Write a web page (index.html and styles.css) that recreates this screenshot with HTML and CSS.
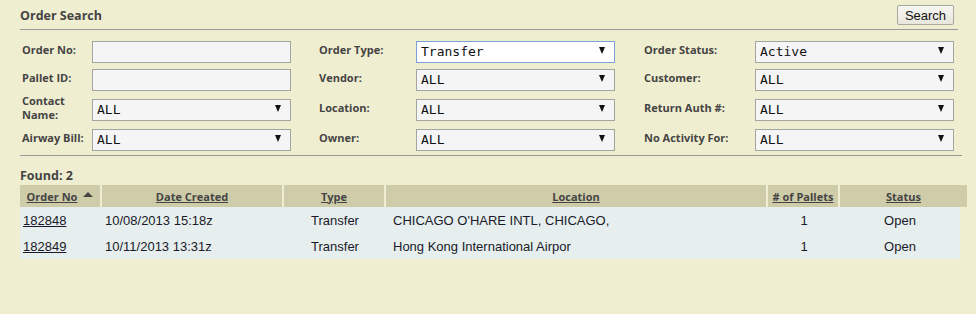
FILE: index.html
```html
<!DOCTYPE html>
<html>

<head>
    <meta charset="utf-8">
    <title>Order Search</title>
    <link rel="stylesheet" href="styles.css">
</head>

<body>
    <div class="page">

        <div class="search-head">
            <h1>Order Search</h1>
            <button class="btn">Search</button>
        </div>

        <div class="form">
            <label>Order No:</label>
            <div class="field"><input type="text"></div>
            <label>Order Type:</label>
            <div class="field sel focus"><select><option>Transfer</option></select></div>
            <label>Order Status:</label>
            <div class="field sel"><select><option>Active</option></select></div>

            <label>Pallet ID:</label>
            <div class="field"><input type="text"></div>
            <label>Vendor:</label>
            <div class="field sel"><select><option>ALL</option></select></div>
            <label>Customer:</label>
            <div class="field sel"><select><option>ALL</option></select></div>

            <label class="wrap">Contact Name:</label>
            <div class="field sel"><select><option>ALL</option></select></div>
            <label>Location:</label>
            <div class="field sel"><select><option>ALL</option></select></div>
            <label>Return Auth #:</label>
            <div class="field sel"><select><option>ALL</option></select></div>

            <label>Airway Bill:</label>
            <div class="field sel"><select><option>ALL</option></select></div>
            <label>Owner:</label>
            <div class="field sel"><select><option>ALL</option></select></div>
            <label>No Activity For:</label>
            <div class="field sel"><select><option>ALL</option></select></div>
        </div>

        <div class="found">Found: 2</div>

        <div class="results">
            <div class="row head">
                <div class="cell"><a href="#">Order No</a><span class="sort"></span></div>
                <div class="cell"><a href="#">Date Created</a></div>
                <div class="cell"><a href="#">Type</a></div>
                <div class="cell"><a href="#">Location</a></div>
                <div class="cell"><a href="#"># of Pallets</a></div>
                <div class="cell"><a href="#">Status</a></div>
            </div>
            <div class="row data">
                <div class="cell"><a href="#">182848</a></div>
                <div class="cell date">10/08/2013 15:18z</div>
                <div class="cell c">Transfer</div>
                <div class="cell loc">CHICAGO O'HARE INTL, CHICAGO,</div>
                <div class="cell c">1</div>
                <div class="cell c">Open</div>
            </div>
            <div class="row data">
                <div class="cell"><a href="#">182849</a></div>
                <div class="cell date">10/11/2013 13:31z</div>
                <div class="cell c">Transfer</div>
                <div class="cell loc">Hong Kong International Airpor</div>
                <div class="cell c">1</div>
                <div class="cell c">Open</div>
            </div>
        </div>

    </div>
</body>

</html>
```

FILE: styles.css
```css
html,
body {
    margin: 0;
    padding: 0;
    height: 100%;
    background: #f0eed0;
}

.page {
    padding: 5px 0 0 20px;
    font-family: "Open Sans", "Liberation Sans", sans-serif;
    color: #444;
}

.search-head {
    width: 938px;
    height: 24px;
    display: flex;
    justify-content: space-between;
    align-items: flex-start;
    border-bottom: 1px solid #999;
}

.search-head h1 {
    margin: 0;
    padding-top: 3px;
    font-size: 12.5px;
    font-weight: bold;
    line-height: 16px;
}

.btn {
    margin-right: 4px;
    height: 20px;
    width: 57px;
    padding: 0;
    border: 1px solid #a8a8a0;
    border-radius: 2px;
    background: linear-gradient(#f7f7f3, #e8e6dc);
    font-family: "Liberation Sans", Arial, sans-serif;
    font-size: 13px;
    color: #111;
}

.form {
    width: 940px;
    padding: 6px 0 3px 2px;
    display: grid;
    grid-template-columns: 70px 227px 97px 228px 111px 199px;
    grid-template-rows: 28px 28px 32px 28px;
    align-items: center;
    border-bottom: 1px solid #999;
}

.form label {
    font-size: 11px;
    font-weight: bold;
    line-height: 14px;
    white-space: nowrap;
}

.form label.wrap {
    white-space: normal;
}

.field {
    width: 199px;
    height: 22px;
    position: relative;
}

.field input,
.field select {
    box-sizing: border-box;
    width: 100%;
    height: 100%;
    margin: 0;
    border: 1px solid #a4a4a0;
    background: #f5f5f5;
    font-family: "DejaVu Sans Mono", "Liberation Mono", monospace;
    font-size: 13px;
    color: #111;
    outline: none;
}

.field select {
    -webkit-appearance: none;
    appearance: none;
    padding: 0 0 0 4px;
}

.sel::after {
    content: '';
    position: absolute;
    right: 10px;
    top: 8px;
    border-left: 3px solid transparent;
    border-right: 3px solid transparent;
    border-top: 7px solid #111;
    pointer-events: none;
}

.focus select {
    background: #fff;
    border-color: #7a9ed6;
}

.found {
    padding-top: 11px;
    font-size: 12.5px;
    font-weight: bold;
    line-height: 18px;
}

/* result grid */
.results {
    width: 947px;
    font-family: "Liberation Sans", Arial, sans-serif;
    font-size: 13px;
}

.row {
    display: grid;
    grid-template-columns: 80px 180px 100px 380px 70px 127px;
    column-gap: 2px;
    align-items: center;
}

.row.head {
    height: 22px;
    align-items: stretch;
}

.head .cell {
    display: flex;
    align-items: center;
    justify-content: center;
    background: #cfcca9;
    font-family: "Open Sans", "Liberation Sans", sans-serif;
    font-size: 11px;
    font-weight: bold;
}

.head .cell a {
    color: #444;
}

.sort {
    display: inline-block;
    margin-left: 6px;
    margin-bottom: 3px;
    border-left: 5px solid transparent;
    border-right: 5px solid transparent;
    border-bottom: 5px solid #444;
}

.row.data {
    width: 940px;
    height: 26px;
    column-gap: 0;
    grid-template-columns: 82px 182px 102px 382px 72px 120px;
    background: #e6eeee;
    color: #1a1a2a;
    white-space: nowrap;
}

.data .cell {
    padding-left: 3px;
}

.data .cell a {
    color: #1a1a2a;
}

.data .date {
    padding-left: 3px;
}

.data .loc {
    padding-left: 7px;
}

.data .c {
    text-align: center;
    padding-left: 0;
}
```
